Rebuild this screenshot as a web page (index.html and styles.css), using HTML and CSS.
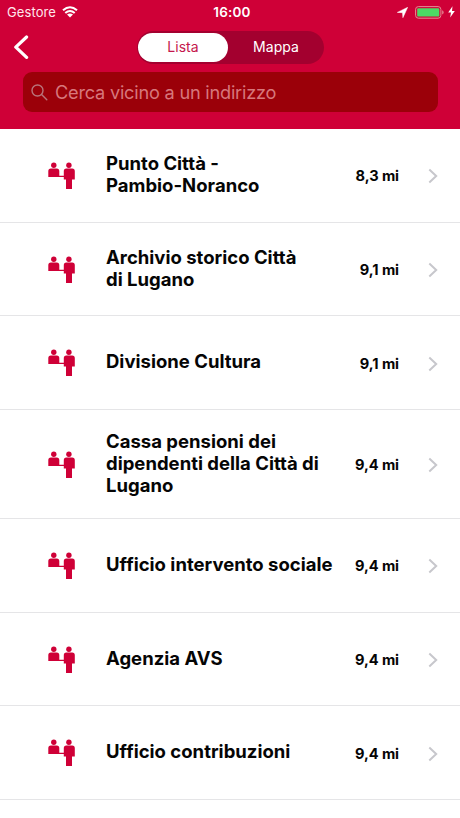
FILE: index.html
```html
<!DOCTYPE html>
<html lang="it">
<head>
<meta charset="utf-8">
<title>Lista</title>
<link rel="stylesheet" href="styles.css">
</head>
<body>
<svg class="defs" aria-hidden="true">
  <symbol id="desk" viewBox="0 0 27 28">
    <circle cx="5.8" cy="3.2" r="2.7"/><circle cx="20.9" cy="3.2" r="2.7"/>
    <path d="M0.3 15.1V9.2Q.3 6.6 2.9 6.6H8.7Q11.3 6.6 11.3 9.2V13.7H15.8V9.2Q15.8 6.6 18.4 6.6H24.2Q26.8 6.6 26.8 9.2V17.6H24V27H18V17.6H15.8V15.1Z"/>
  </symbol>
  <symbol id="chevron" viewBox="0 0 10 16"><path d="M1.3 1.5 8.2 8 1.3 14.5" fill="none" stroke="#c7c7cc" stroke-width="2"/></symbol>
</svg>
<header class="header">
  <div class="status">
    <div class="carrier"><span>Gestore</span>
      <svg width="16" height="12" viewBox="0 0 16 12"><path d="M1 4.3Q8-1.8 15 4.3M3.3 7Q8 3 12.7 7" fill="none" stroke="#fff" stroke-width="2.1"/><path d="M5 8.6Q8 6.3 11 8.6L8 11.6Z" fill="#fff"/></svg>
    </div>
    <span class="time">16:00</span>
    <div class="power">
      <svg width="11" height="11" viewBox="0 0 11 11"><path d="M.3 5.4 10.7.3 5.9 10.7 5.5 5.7Z" fill="#fff" stroke="#fff" stroke-width=".5"/></svg>
      <svg class="battery" width="29" height="13" viewBox="0 0 29 13"><rect x=".6" y=".6" width="25.3" height="11.6" rx="2.8" fill="none" stroke="#e58a94"/><rect x="2.2" y="2.2" width="22.1" height="8.4" rx="1.2" fill="#4cd964"/><path d="M27.2 4.3Q28.6 4.8 28.6 6.4T27.2 8.5Z" fill="#e58a94"/></svg>
      <svg width="7" height="12" viewBox="0 0 7 12"><path d="M4.5.2.2 6.5H3L2.2 11.5 6.8 4.9H4Z" fill="#fff"/></svg>
    </div>
  </div>
  <nav class="nav">
    <svg class="back" width="16" height="24" viewBox="0 0 16 24"><path d="M13.6 2 2.8 12.2 13.6 22.4" fill="none" stroke="#fff" stroke-width="3.2" stroke-linecap="round" stroke-linejoin="round"/></svg>
    <div class="segments"><span class="segment active">Lista</span><span class="segment">Mappa</span></div>
  </nav>
  <div class="search">
    <svg width="17" height="17" viewBox="0 0 17 17"><g fill="none" stroke="#b9747a" stroke-width="1.4" stroke-linecap="round"><circle cx="6.5" cy="6.5" r="5.5"/><path d="M10.6 10.6 15.8 15.8"/></g></svg>
    <span>Cerca vicino a un indirizzo</span>
  </div>
</header>
<main class="list">
  <div class="row"><svg class="icon"><use href="#desk"/></svg><h2>Punto Città -<br>Pambio-Noranco</h2><span class="distance">8,3 mi</span><svg class="chevron"><use href="#chevron"/></svg></div>
  <div class="row"><svg class="icon"><use href="#desk"/></svg><h2>Archivio storico Città<br>di Lugano</h2><span class="distance">9,1 mi</span><svg class="chevron"><use href="#chevron"/></svg></div>
  <div class="row"><svg class="icon"><use href="#desk"/></svg><h2>Divisione Cultura</h2><span class="distance">9,1 mi</span><svg class="chevron"><use href="#chevron"/></svg></div>
  <div class="row tall"><svg class="icon"><use href="#desk"/></svg><h2>Cassa pensioni dei<br>dipendenti della Città di<br>Lugano</h2><span class="distance">9,4 mi</span><svg class="chevron"><use href="#chevron"/></svg></div>
  <div class="row"><svg class="icon"><use href="#desk"/></svg><h2>Ufficio intervento sociale</h2><span class="distance">9,4 mi</span><svg class="chevron"><use href="#chevron"/></svg></div>
  <div class="row"><svg class="icon"><use href="#desk"/></svg><h2>Agenzia AVS</h2><span class="distance">9,4 mi</span><svg class="chevron"><use href="#chevron"/></svg></div>
  <div class="row"><svg class="icon"><use href="#desk"/></svg><h2>Ufficio contribuzioni</h2><span class="distance">9,4 mi</span><svg class="chevron"><use href="#chevron"/></svg></div>
</main>
</body>
</html>
```
FILE: styles.css
```css
* { box-sizing: border-box; }
body {
  margin: 0;
  height: 818px;
  overflow: hidden;
  background: #fff;
  color: #050505;
  font-family: Inter, "Liberation Sans", sans-serif;
}
svg { display: block; flex: none; }
.defs { display: none; }
.header { height: 129px; background: #cf0037; color: #fff; }
.status {
  display: grid;
  grid-template-columns: 1fr auto 1fr;
  align-items: center;
  height: 24px;
  padding: 0 5px 0 7px;
}
.carrier { display: flex; align-items: center; gap: 6px; font-size: 13px; letter-spacing: .1px; color: #ffe6ec; }
.time { padding-left: 2px; font-size: 13.5px; font-weight: 600; letter-spacing: .2px; }
.power { display: flex; align-items: center; justify-content: flex-end; }
.battery { margin: 0 4px 0 7px; }
.nav { display: flex; align-items: center; height: 46px; padding-left: 13px; }
.segments {
  display: flex;
  width: 187px;
  height: 33px;
  margin-left: 108px;
  padding: 2px 3px 2px 1px;
  border-radius: 17px;
  background: #a3002f;
}
.segment { flex: 1 1 0; padding-left: 3px; text-align: center; font-size: 14px; line-height: 28px; letter-spacing: .05px; }
.active { flex: 0 0 90px; padding-left: 0; border-radius: 15px; background: #fff; color: #c4174c; }
.search {
  display: flex;
  align-items: center;
  gap: 7px;
  height: 40px;
  margin: 2px 22px 0 23px;
  padding-left: 8px;
  border-radius: 9px;
  background: #9b0009;
  color: #d7777c;
  font-size: 18.2px;
  letter-spacing: -.23px;
}
.row {
  display: grid;
  grid-template-columns: 58px 1fr auto 39px;
  align-items: center;
  height: 93.7px;
  padding: 1px 22px 0 48px;
  border-bottom: 1px solid #e5e5e7;
}
.tall { height: 109px; }
.icon { width: 27px; height: 28px; fill: #cf0037; }
.row h2 {
  margin: 0 0 4px;
  font-size: 18.5px;
  line-height: 22px;
  font-weight: 660;
  letter-spacing: .01px;
  white-space: nowrap;
  font-feature-settings: "calt" 0;
}
.distance { padding-top: 1px; font-size: 14.6px; font-weight: 660; letter-spacing: -.08px; }
.chevron { width: 10px; height: 16px; margin-top: 1px; justify-self: end; }
```
